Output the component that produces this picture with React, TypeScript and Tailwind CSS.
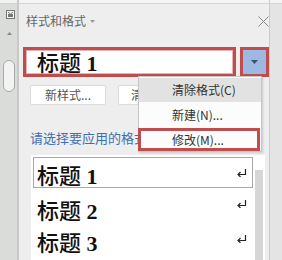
import React from "react";

const ReturnMark = () => (
  <svg width="10" height="8" viewBox="0 0 10 8" className="block">
    <path d="M8.5 0 V5.5 H1.5" stroke="#222" strokeWidth="1.2" fill="none" />
    <path d="M3.5 3 L1 5.5 L3.5 8" stroke="#222" strokeWidth="1.2" fill="none" />
  </svg>
);

const Head = ({ n, className = "" }: { n: string; className?: string }) => (
  <span className={`text-[22px] leading-[22px] text-[#111] whitespace-nowrap ${className}`}>
    <span className="font-['Noto_Sans_CJK_SC',sans-serif] font-medium">标题</span>
    <span className="font-['Liberation_Serif',serif] font-bold"> {n}</span>
  </span>
);

export default function App() {
  const cjk = "font-['Noto_Sans_CJK_SC','Noto_Sans',sans-serif]";
  return (
    <div className={`relative w-[282px] h-[260px] overflow-hidden flex ${cjk}`}>
      {/* left strip */}
      <div className="w-[17px] h-full bg-[#dadcda] flex flex-col items-center">
        <div className="h-[4px] w-full bg-[#f2f2f2] border-b border-[#d4d4d4]" />
        <svg width="9" height="9" viewBox="0 0 9 9" className="mt-[6px] ml-[3px]">
          <rect x="0.5" y="0.5" width="8" height="8" fill="#f4f4f4" stroke="#777" />
          <rect x="2" y="4" width="5" height="3" fill="#777" />
          <path d="M2 2 L4.5 4 L7 2" stroke="#777" fill="none" />
        </svg>
        <svg width="5" height="3" viewBox="0 0 5 3" className="mt-[13px] ml-[2px]">
          <path d="M0 3 L2.5 0 L5 3 Z" fill="#888" />
        </svg>
        <div className="mt-[25px] ml-[1px] w-[12px] h-[32px] rounded-full border border-[#a9aba9] bg-[#f3f3f3]" />
      </div>
      <div className="w-[2px] h-full bg-[#c8cac8]" />

      {/* main panel */}
      <div className="w-[250px] h-full bg-[#eeeeee] flex flex-col">
        <div className="h-[4px] w-full bg-[#f4f4f4] border-b border-[#d6d6d6]" />
        <div className="h-[34px] flex items-center justify-between pl-[7px]">
          <div className="flex items-center text-[12px] text-[#666]">
            <span>样式和格式</span>
            <svg width="5" height="3" viewBox="0 0 5 3" className="ml-[4px] mt-[1px]">
              <path d="M0 0 L5 0 L2.5 3 Z" fill="#999" />
            </svg>
          </div>
          <svg width="11" height="11" viewBox="0 0 11 11">
            <path d="M0.5 0.5 L10.5 10.5 M10.5 0.5 L0.5 10.5" stroke="#8a8a8a" strokeWidth="1" />
          </svg>
        </div>

        <div className="mt-[9px] pl-[4px] flex gap-[4px]">
          <div className="w-[213px] h-[30px] border-[3px] border-[#c04d4e] bg-white flex items-center pl-[11px] shadow-[inset_0_0_0_1px_#eab3b3]">
            <Head n="1" />
          </div>
          <div className="w-[29px] h-[30px] border-[3px] border-[#c04d4e] bg-[#9db9e2] flex items-center justify-center">
            <svg width="7" height="4" viewBox="0 0 7 4">
              <path d="M0 0 L7 0 L3.5 4 Z" fill="#3f4f6e" />
            </svg>
          </div>
        </div>

        <div className="mt-[8px] pl-[11px] flex gap-[12px]">
          <div className="w-[76px] h-[20px] rounded-[2px] border border-[#dcdcdc] bg-white flex items-center justify-center text-[12px] text-[#555]">
            新样式...
          </div>
          <div className="w-[76px] h-[20px] rounded-[2px] border border-[#dcdcdc] bg-white flex items-center justify-start pl-[12px] text-[12px] text-[#555] whitespace-nowrap">
            清除格式
          </div>
        </div>

        <div className="mt-[25px] pl-[11px] text-[13px] leading-[16px] text-[#3e70ae] whitespace-nowrap">
          请选择要应用的格式:
        </div>

        <div className="mt-[9px] ml-[12px] mr-[4px] flex-1 bg-white flex">
          <div className="flex-1 pt-[2px] pl-[2px]">
            <div className="w-[220px] h-[31px] border border-[#a8a8a8] flex items-start justify-between pl-[3px] pr-[5px]">
              <Head n="1" className="mt-[5px]" />
              <div className="mt-[11px]"><ReturnMark /></div>
            </div>
            <div className="mt-[5px] w-[220px] h-[32px] flex items-start justify-between pl-[4px] pr-[6px]">
              <Head n="2" className="mt-[5px]" />
              <div className="mt-[7px]"><ReturnMark /></div>
            </div>
            <div className="w-[220px] h-[32px] flex items-start justify-between pl-[4px] pr-[6px]">
              <Head n="3" className="mt-[5px]" />
              <div className="mt-[10px]"><ReturnMark /></div>
            </div>
          </div>
          <div className="w-[10px] pt-[15px] flex">
            <div className="w-[8px] h-full bg-[#d6d6d6]" />
          </div>
        </div>
      </div>

      {/* right strip */}
      <div className="flex-1 h-full bg-[#e4e4e4] border-l border-[#cbcbcb]">
        <div className="h-[4px] w-full bg-[#f4f4f4] border-b border-[#d6d6d6]" />
      </div>

      {/* dropdown menu */}
      <div className="absolute left-[138px] top-[76px] w-[124px] h-[76px] bg-[#fcfcfc] border border-[#c6c6c6] shadow-[1px_1px_2px_rgba(0,0,0,0.15)] text-[12px] text-[#333]">
        <div className="h-[24px] mt-[1px] bg-[#e2e2e2] flex items-center pl-[33px]">清除格式(C)</div>
        <div className="h-[25px] flex items-center pl-[33px]">新建(N)...</div>
        <div className="absolute left-[-1px] top-[51px] w-[122px] h-[23px] border-[3px] border-[#c04d4e] flex items-center pl-[31px]">
          修改(M)...
        </div>
      </div>
    </div>
  );
}
